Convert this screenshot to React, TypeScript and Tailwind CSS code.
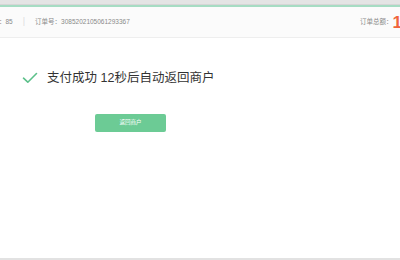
import React from 'react';

const font = { fontFamily: '"Liberation Sans", "Noto Sans CJK SC", sans-serif' };

const CheckMark = () => (
  <svg width="16" height="12" viewBox="0 0 16 12" fill="none">
    <path d="M1.5 6.2 L5.8 10.2 L14.5 1.5" stroke="#5cc08a" strokeWidth="1.6" strokeLinecap="round" strokeLinejoin="round" />
  </svg>
);

export default function App() {
  return (
    <div className="w-[400px] h-[260px] bg-white flex flex-col overflow-hidden" style={font}>
      {/* top strip */}
      <div className="h-[4px] bg-[#e4e4e4] shrink-0" />
      <div className="h-[1px] bg-[#d6d6d6] shrink-0" />
      <div className="h-[2px] bg-[#a6dcc3] shrink-0" />

      {/* order header */}
      <div className="h-[31px] bg-[#fbfbfb] border-b border-[#eeeeee] flex items-center justify-between shrink-0">
        <div className="flex items-center text-[6.5px] text-[#8a8a8a] whitespace-nowrap">
          <span className="-ml-[1px]">：85</span>
          <span className="ml-[10px] text-[#dddddd] text-[9px]">|</span>
          <span className="ml-[10px]">订单号：3085202105061293367</span>
        </div>
        <div className="flex items-center whitespace-nowrap -mr-[2px]">
          <span className="text-[6.5px] text-[#8a8a8a]">订单总额：</span>
          <span className="text-[17px] leading-none text-[#f0643c] font-semibold">1</span>
        </div>
      </div>

      {/* content */}
      <div className="flex-1 flex flex-col">
        <div className="flex items-center mt-[34px] ml-[22px] gap-[9px]">
          <CheckMark />
          <span className="text-[12.5px] text-[#333333] leading-none">支付成功 12秒后自动返回商户</span>
        </div>
        <button className="mt-[29px] ml-[95px] w-[71px] h-[18px] rounded-[2px] bg-[#6ccb95] text-white text-[5.5px] flex items-center justify-center">
          返回商户
        </button>
      </div>

      <div className="h-[2px] bg-[#e2e2e2] shrink-0" />
    </div>
  );
}
